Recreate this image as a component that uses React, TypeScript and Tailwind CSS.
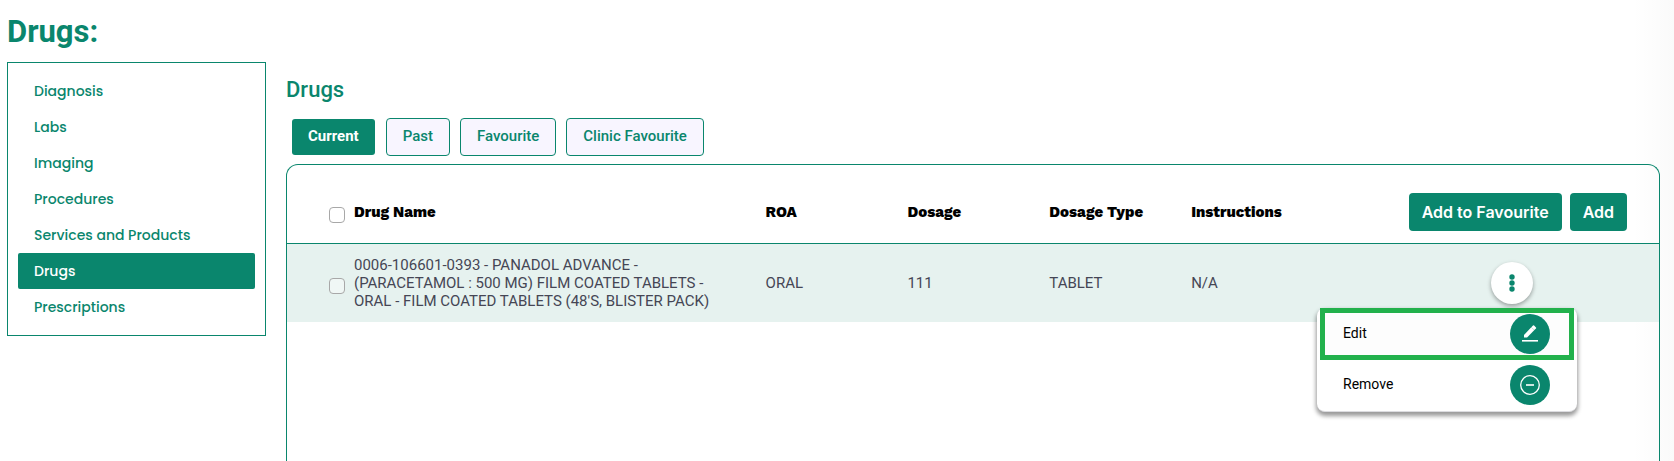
import { useState } from "react"
import clsx from "clsx"

const sections = [
  "Diagnosis",
  "Labs",
  "Imaging",
  "Procedures",
  "Services and Products",
  "Drugs",
  "Prescriptions",
]

const tabs = ["Current", "Past", "Favourite", "Clinic Favourite"]

interface Drug {
  name: string
  roa: string
  dosage: string
  type: string
  instructions: string
}

const drugs: Drug[] = [
  {
    name: "0006-106601-0393 - PANADOL ADVANCE - (PARACETAMOL : 500 MG) FILM COATED TABLETS - ORAL - FILM COATED TABLETS (48'S, BLISTER PACK)",
    roa: "ORAL",
    dosage: "111",
    type: "TABLET",
    instructions: "N/A",
  },
]

function Sidebar() {
  const [active, setActive] = useState("Drugs")

  return (
    <nav className="w-[259px] shrink-0 border border-[#0a866d] p-2.5">
      {sections.map((section) => (
        <a
          key={section}
          href="#"
          onClick={() => setActive(section)}
          className={clsx(
            "flex h-9 items-center rounded-xs px-4 font-['Poppins',Inter,sans-serif] text-sm font-medium",
            section === active ? "bg-[#0a866d] text-white" : "text-[#0a866d]"
          )}
        >
          {section}
        </a>
      ))}
    </nav>
  )
}

function Tabs() {
  const [active, setActive] = useState("Current")

  return (
    <div className="flex gap-2.5 pl-[5px]">
      {tabs.map((tab) => (
        <button
          key={tab}
          type="button"
          onClick={() => setActive(tab)}
          className={clsx(
            "h-[38px] rounded border px-4 pb-0.5 text-[15px]",
            tab === active
              ? "border-transparent bg-[#0a866d] bg-clip-padding font-bold text-white"
              : "border-[#0a866d] bg-[#f8f5ff] font-medium text-[#0a866d]"
          )}
        >
          {tab}
        </button>
      ))}
    </div>
  )
}

function EditIcon() {
  return (
    <svg viewBox="0 0 18 18" className="size-[18px]" fill="currentColor">
      <path d="M3 12.6V9.9L10.3 2.2 13.4 5.1 6.1 12.6Z" />
      <path d="M10.3 2.2 12 .6a.8.8 0 0 1 1.1 0L15 2.4a.8.8 0 0 1 0 1.1L13.4 5.1Z" />
      <path d="M1 15h16v1.6H1Z" />
    </svg>
  )
}

function RemoveIcon() {
  return (
    <svg viewBox="0 0 20 20" className="size-5" fill="none" stroke="currentColor">
      <circle cx="10" cy="10" r="9.3" strokeWidth="1.3" />
      <path d="M6 10h8" strokeWidth="1.6" />
    </svg>
  )
}

function RowMenu() {
  return (
    <div className="absolute top-[46px] -right-11 z-10 w-[260px] rounded-lg border-b border-[#dcdce0] bg-white px-[3px] pb-px text-left shadow-[0_3px_4px_1px_rgba(0,0,0,0.4)]">
      <button type="button" className="flex h-[52px] w-full items-center justify-between border-5 border-[#22b14c] bg-[#fdfdfd] pr-[19px] pl-[18px] text-sm text-black">
        <span className="pb-0.5">Edit</span>
        <span className="flex size-10 items-center justify-center rounded-full bg-[#0a866d] text-white">
          <EditIcon />
        </span>
      </button>
      <button type="button" className="flex h-[50px] w-full items-center justify-between border-5 border-transparent pr-[19px] pl-[18px] text-sm text-black">
        <span className="pb-0.5">Remove</span>
        <span className="flex size-10 items-center justify-center rounded-full bg-[#0a866d] text-white">
          <RemoveIcon />
        </span>
      </button>
    </div>
  )
}

const checkbox = "mt-1.5 block size-4 appearance-none rounded border border-[#a8a8a8] bg-white/40 checked:bg-[#0a866d]"

function DrugTable() {
  const [openRow, setOpenRow] = useState<number | null>(0)

  return (
    <table className="w-full table-fixed border-separate border-spacing-0 text-left">
      <thead>
        <tr className="h-[79px] font-['Work_Sans',Inter,sans-serif] text-[15px] text-black *:border-b *:border-[#0a866d]">
          <th className="w-[67px] pt-4 pl-[42px]">
            <input type="checkbox" aria-label="Select all drugs" className={checkbox} />
          </th>
          <th className="w-[30%] pt-4 font-extrabold">Drug Name</th>
          <th className="pt-4 font-extrabold">ROA</th>
          <th className="pt-4 font-extrabold">Dosage</th>
          <th className="pt-4 font-extrabold">Dosage Type</th>
          <th className="pt-4 font-extrabold">Instructions</th>
          <th className="w-[326px] pr-8">
            <div className="mt-4 flex justify-end gap-2 font-[Inter,sans-serif] text-base text-white">
              <button type="button" className="h-[38px] rounded bg-[#0a866d] px-[13px] font-semibold">
                Add to Favourite
              </button>
              <button type="button" className="h-[38px] rounded bg-[#0a866d] px-[13px] font-semibold">
                Add
              </button>
            </div>
          </th>
        </tr>
      </thead>
      <tbody>
        {drugs.map((drug, i) => (
          <tr key={drug.name} className="h-[78px] text-[15px] leading-[18px] text-[#454655] *:bg-[#e6f2ef]">
            <td className="pl-[42px]">
              <input type="checkbox" aria-label={drug.name} className={checkbox} />
            </td>
            <td className="pr-8">{drug.name}</td>
            <td>{drug.roa}</td>
            <td>{drug.dosage}</td>
            <td>{drug.type}</td>
            <td>{drug.instructions}</td>
            <td className="pr-[126px]">
              <div className="relative ml-auto size-[42px]">
                <button
                  type="button"
                  aria-label="Drug actions"
                  onClick={() => setOpenRow(openRow === i ? null : i)}
                  className="flex size-[42px] items-center justify-center rounded-full bg-white text-[#0a866d] shadow-[0_2px_4px_rgba(0,0,0,0.35)]"
                >
                  <svg viewBox="0 0 6 18" className="h-[18px] w-1.5" fill="currentColor">
                    <circle cx="3" cy="3" r="2.7" />
                    <circle cx="3" cy="9" r="2.7" />
                    <circle cx="3" cy="15" r="2.7" />
                  </svg>
                </button>
                {openRow === i && <RowMenu />}
              </div>
            </td>
          </tr>
        ))}
      </tbody>
    </table>
  )
}

export default function App() {
  return (
    <div className="flex min-h-screen flex-col bg-[linear-gradient(to_left,#fafafa,#ffffff_40px)] pr-[14px] pl-[7px] font-[Roboto,sans-serif]">
      <h1 className="pt-3 pb-2.5 text-[31px] leading-10 font-bold text-[#0a866d]">Drugs:</h1>
      <div className="flex flex-1 items-stretch gap-5">
        <div>
          <Sidebar />
        </div>
        <main className="flex min-w-0 flex-1 flex-col">
          <h2 className="pt-3 pb-3 text-[22px] leading-8 font-medium text-[#0a866d]">Drugs</h2>
          <Tabs />
          <section className="mt-2 flex-1 rounded-t-xl border border-b-0 border-[#0a866d]">
            <DrugTable />
          </section>
        </main>
      </div>
    </div>
  )
}
